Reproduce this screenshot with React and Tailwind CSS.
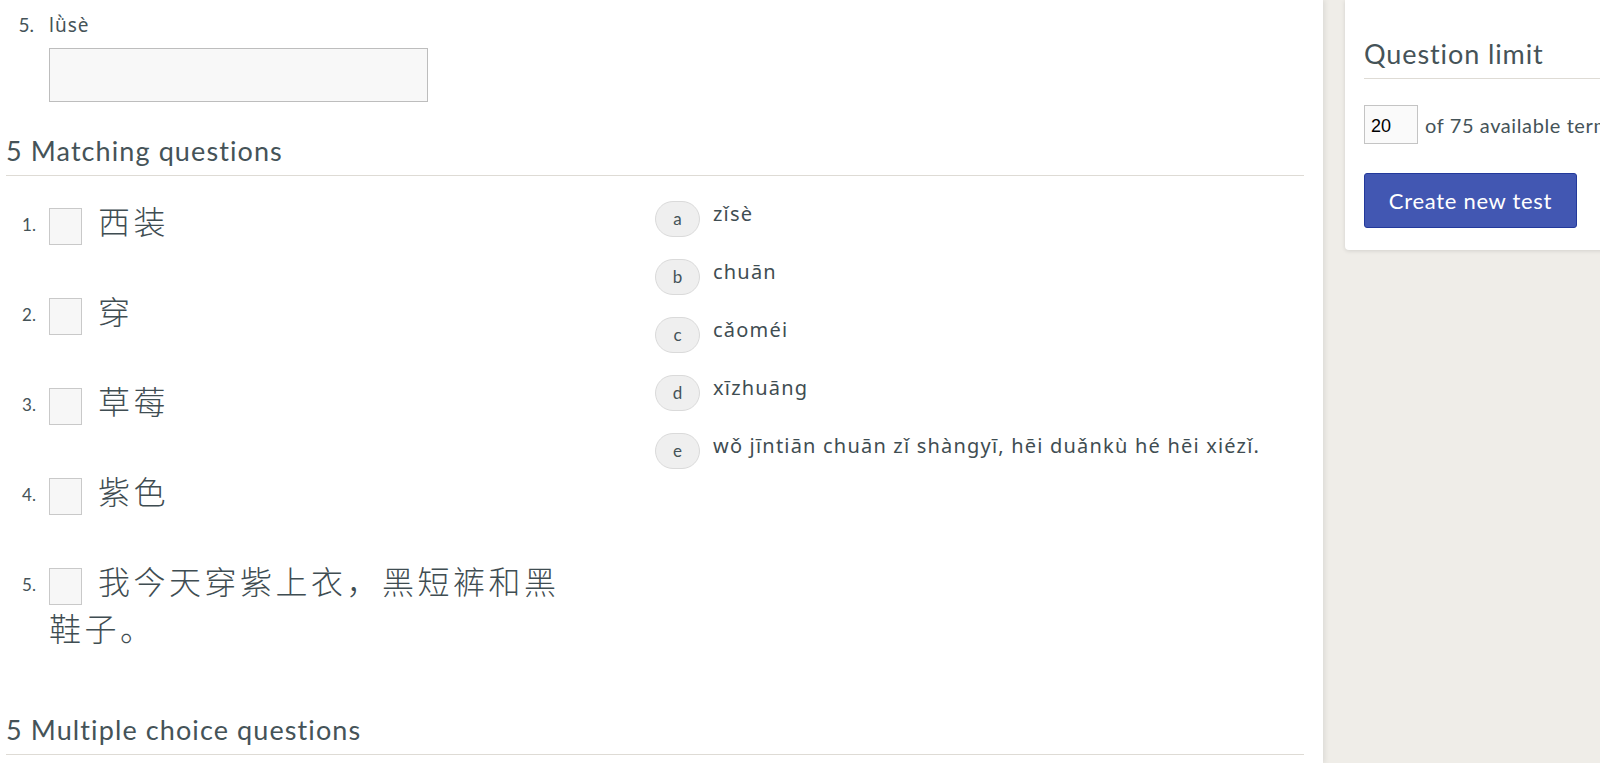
import React from 'react';

// Quizlet-style test page: tail of the written section, the matching block,
// and the "Question limit" side card.

const HEAD = "font-['Lato','Noto_Sans',sans-serif]";
const PINYIN = "font-['Noto_Sans','DejaVu_Sans',sans-serif]";
const HANZI = "font-['Noto_Sans_CJK_SC','Noto_Sans_CJK_TC',sans-serif]";

const prompts = [
  '西装',
  '穿',
  '草莓',
  '紫色',
  '我今天穿紫上衣，黑短裤和黑鞋子。',
];

const answers = [
  { key: 'a', text: 'zǐsè' },
  { key: 'b', text: 'chuān' },
  { key: 'c', text: 'cǎoméi' },
  { key: 'd', text: 'xīzhuāng' },
  { key: 'e', text: 'wǒ jīntiān chuān zǐ shàngyī, hēi duǎnkù hé hēi xiézǐ.' },
];

function SectionTitle({ children, className = '' }) {
  return (
    <h2
      className={`${HEAD} text-[27px] leading-[32px] tracking-[1.1px] text-[#455358] pb-2 border-b border-[#dedbd5] ${className}`}
    >
      {children}
    </h2>
  );
}

function MatchRow({ n, text }) {
  return (
    <div className="flex items-start">
      <span className={`${HEAD} relative top-[4px] w-[30px] shrink-0 text-right text-[17px] leading-[47px] text-[#455358]`}>
        {n}.
      </span>
      <div className={`${HANZI} font-light ml-[13px] w-[526px] text-[32px] leading-[47px] tracking-[3.5px] text-[#3f4d52]`}>
        <span className="inline-block align-top relative top-[11px] w-[33px] h-[37px] bg-[#f7f7f7] border border-[#c9c9c9] mr-[16px]" />
        {text}
      </div>
    </div>
  );
}

function AnswerRow({ k, text }) {
  return (
    <div className="flex items-start">
      <span className={`${HEAD} w-[45px] h-[36px] shrink-0 rounded-full bg-[#efefef] border border-[#dadada] flex items-center justify-center text-[17px] text-[#455358]`}>
        {k}
      </span>
      <span className={`${PINYIN} ml-[13px] text-[20px] leading-[26px] tracking-[1.2px] text-[#3f4d52]`}>
        {text}
      </span>
    </div>
  );
}

export default function App() {
  return (
    <div className="flex h-[763px] w-[1600px] overflow-hidden bg-[#efede8]">
      <main className="w-[1323px] shrink-0 bg-white pl-[6px] pr-[19px] shadow-[2px_0_5px_rgba(0,0,0,0.08)] relative z-10">
        {/* last written question */}
        <div className={`${HEAD} flex items-center mt-[13px] text-[19px] leading-[24px] text-[#455358]`}>
          <span className="w-[28px] text-right">5.</span>
          <span className={`${PINYIN} ml-[15px] text-[19px] tracking-[1px]`}>lǜsè</span>
        </div>
        <div className="ml-[43px] mt-[11px] w-[379px] h-[54px] bg-[#f8f8f8] border border-[#bdbdbd]" />

        <SectionTitle className="mt-[33px]">5 Matching questions</SectionTitle>

        <div className="flex mt-[21px]">
          <div className="w-[649px] shrink-0 flex flex-col gap-[43px]">
            {prompts.map((p, i) => (
              <MatchRow key={i} n={i + 1} text={p} />
            ))}
          </div>
          <div className="flex flex-col gap-[22px] mt-[4px]">
            {answers.map((a) => (
              <AnswerRow key={a.key} k={a.key} text={a.text} />
            ))}
          </div>
        </div>

        <SectionTitle className="mt-[63px]">5 Multiple choice questions</SectionTitle>
      </main>

      <aside className="flex-1 pl-[22px] overflow-hidden">
        <div className="w-[320px] bg-white rounded-bl-[4px] shadow-[0_1px_4px_rgba(0,0,0,0.12)] pl-[19px] pt-[38px] pb-[22px]">
          <h3 className={`${HEAD} text-[27px] leading-[32px] tracking-[0.9px] text-[#455358] pb-2 border-b border-[#dedbd5]`}>
            Question limit
          </h3>
          <div className="flex items-center mt-[26px]">
            <div className="w-[54px] h-[39px] border border-[#c4c4c4] bg-[#fafafa] flex items-center pl-[6px] pt-[3px] font-['Liberation_Sans',sans-serif] text-[18px] text-black">
              20
            </div>
            <span className={`${HEAD} ml-[7px] text-[20px] tracking-[0.6px] text-[#455358] whitespace-nowrap`}>
              of 75 available terms
            </span>
          </div>
          <button className={`${HEAD} mt-[29px] w-[213px] h-[55px] rounded-[3px] bg-[#4257b2] border border-[#23399b] text-white text-[22px] tracking-[0.7px]`}>
            Create new test
          </button>
        </div>
      </aside>
    </div>
  );
}
